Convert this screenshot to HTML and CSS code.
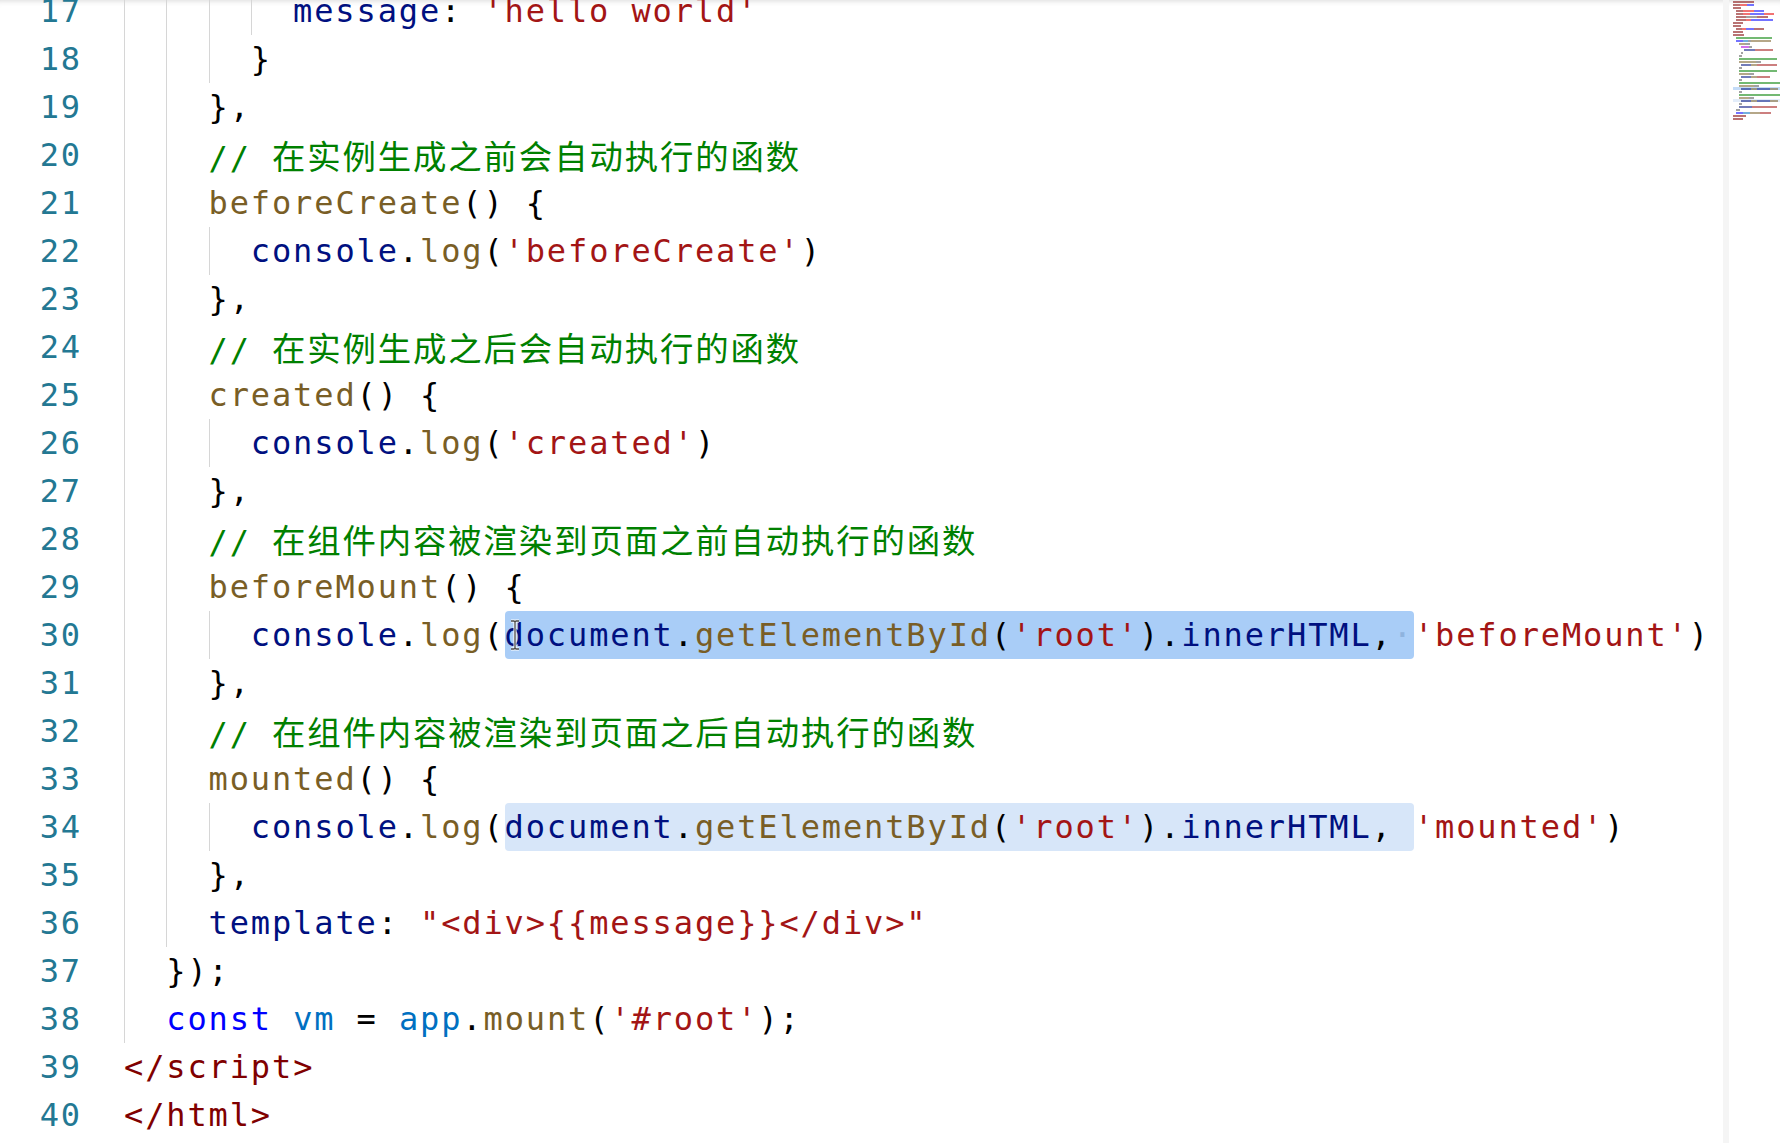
FILE: index.html
```html
<!DOCTYPE html>
<html lang="en">
<head>
    <meta charset="UTF-8">
    <meta name="viewport" content="width=device-width, initial-scale=1.0">
    <title>lesson - lifecycle</title>
    <link rel="stylesheet" href="styles.css">
</head>
<body>
    <div class="editor">
        <div class="code">
            <div class="line"><span class="ln">17</span><span class="src"><span class="ind g"></span><span class="ind g"></span><span class="ind g"></span><span class="ind g"></span><span class="v">message</span>: <span class="s">'hello world'</span></span></div>
            <div class="line"><span class="ln">18</span><span class="src"><span class="ind g"></span><span class="ind g"></span><span class="ind g"></span>}</span></div>
            <div class="line"><span class="ln">19</span><span class="src"><span class="ind g"></span><span class="ind g"></span>},</span></div>
            <div class="line"><span class="ln">20</span><span class="src"><span class="ind g"></span><span class="ind g"></span><span class="c">// <span class="cjk">在实例生成之前会自动执行的函数</span></span></span></div>
            <div class="line"><span class="ln">21</span><span class="src"><span class="ind g"></span><span class="ind g"></span><span class="f">beforeCreate</span>() {</span></div>
            <div class="line"><span class="ln">22</span><span class="src"><span class="ind g"></span><span class="ind g"></span><span class="ind g"></span><span class="v">console</span>.<span class="f">log</span>(<span class="s">'beforeCreate'</span>)</span></div>
            <div class="line"><span class="ln">23</span><span class="src"><span class="ind g"></span><span class="ind g"></span>},</span></div>
            <div class="line"><span class="ln">24</span><span class="src"><span class="ind g"></span><span class="ind g"></span><span class="c">// <span class="cjk">在实例生成之后会自动执行的函数</span></span></span></div>
            <div class="line"><span class="ln">25</span><span class="src"><span class="ind g"></span><span class="ind g"></span><span class="f">created</span>() {</span></div>
            <div class="line"><span class="ln">26</span><span class="src"><span class="ind g"></span><span class="ind g"></span><span class="ind g"></span><span class="v">console</span>.<span class="f">log</span>(<span class="s">'created'</span>)</span></div>
            <div class="line"><span class="ln">27</span><span class="src"><span class="ind g"></span><span class="ind g"></span>},</span></div>
            <div class="line"><span class="ln">28</span><span class="src"><span class="ind g"></span><span class="ind g"></span><span class="c">// <span class="cjk">在组件内容被渲染到页面之前自动执行的函数</span></span></span></div>
            <div class="line"><span class="ln">29</span><span class="src"><span class="ind g"></span><span class="ind g"></span><span class="f">beforeMount</span>() {</span></div>
            <div class="line"><span class="ln">30</span><span class="src"><span class="ind g"></span><span class="ind g"></span><span class="ind g"></span><span class="v">console</span>.<span class="f">log</span>(<span class="sel"><span class="v">document</span>.<span class="f">getElementById</span>(<span class="s">'root'</span>).<span class="v">innerHTML</span>,<span class="ws">·</span><svg class="ibeam" width="12" height="32" viewBox="0 0 12 32"><path d="M2 2h3l1 1 1-1h3M6 3v26M2 30h3l1-1 1 1h3" fill="none" stroke="#fff" stroke-width="3"/><path d="M2 2h3l1 1 1-1h3M6 3v26M2 30h3l1-1 1 1h3" fill="none" stroke="#4a4a4a" stroke-width="1.3"/></svg></span><span class="s">'beforeMount'</span>)</span></div>
            <div class="line"><span class="ln">31</span><span class="src"><span class="ind g"></span><span class="ind g"></span>},</span></div>
            <div class="line"><span class="ln">32</span><span class="src"><span class="ind g"></span><span class="ind g"></span><span class="c">// <span class="cjk">在组件内容被渲染到页面之后自动执行的函数</span></span></span></div>
            <div class="line"><span class="ln">33</span><span class="src"><span class="ind g"></span><span class="ind g"></span><span class="f">mounted</span>() {</span></div>
            <div class="line"><span class="ln">34</span><span class="src"><span class="ind g"></span><span class="ind g"></span><span class="ind g"></span><span class="v">console</span>.<span class="f">log</span>(<span class="sel match"><span class="v">document</span>.<span class="f">getElementById</span>(<span class="s">'root'</span>).<span class="v">innerHTML</span>, </span><span class="s">'mounted'</span>)</span></div>
            <div class="line"><span class="ln">35</span><span class="src"><span class="ind g"></span><span class="ind g"></span>},</span></div>
            <div class="line"><span class="ln">36</span><span class="src"><span class="ind g"></span><span class="ind g"></span><span class="v">template</span>: <span class="s">"&lt;div&gt;{{message}}&lt;/div&gt;"</span></span></div>
            <div class="line"><span class="ln">37</span><span class="src"><span class="ind g"></span>});</span></div>
            <div class="line"><span class="ln">38</span><span class="src"><span class="ind g"></span><span class="k">const</span> <span class="cv">vm</span> = <span class="cv">app</span>.<span class="f">mount</span>(<span class="s">'#root'</span>);</span></div>
            <div class="line"><span class="ln">39</span><span class="src"><span class="t">&lt;/script&gt;</span></span></div>
            <div class="line"><span class="ln">40</span><span class="src"><span class="t">&lt;/html&gt;</span></span></div>
        </div>

        <!-- minimap: one bar per token, width = chars * 1.4px -->
        <div class="minimap" aria-hidden="true">
            <div class="mm"><i class="t" style="width:21px"></i></div>
            <div class="mm"><i class="t" style="width:7px"></i><i class="a" style="width:7px"></i><i class="k" style="width:7px"></i></div>
            <div class="mm"><i class="t" style="width:8px"></i></div>
            <div class="mm"><i style="width:3px"></i><i class="t" style="width:7px"></i><i class="a" style="width:11px"></i><i class="k" style="width:10px"></i></div>
            <div class="mm"><i style="width:3px"></i><i class="t" style="width:7px"></i><i class="a" style="width:7px"></i><i class="k" style="width:14px"></i><i class="a" style="width:10px"></i></div>
            <div class="mm"><i style="width:3px"></i><i class="t" style="width:10px"></i><i class="p" style="width:11px"></i><i class="t" style="width:11px"></i></div>
            <div class="mm"><i style="width:3px"></i><i class="t" style="width:10px"></i><i class="a" style="width:5px"></i><i class="k" style="width:22px"></i></div>
            <div class="mm"><i class="t" style="width:10px"></i></div>
            <div class="mm"><i class="t" style="width:8px"></i></div>
            <div class="mm"><i style="width:3px"></i><i class="t" style="width:6px"></i><i class="a" style="width:4px"></i><i class="k" style="width:8px"></i><i class="t" style="width:10px"></i></div>
            <div class="mm"><i class="t" style="width:10px"></i></div>
            <div class="mm"><i class="t" style="width:11px"></i></div>
            <div class="mm"><i style="width:3px"></i><i class="c" style="width:36px"></i></div>
            <div class="mm"><i style="width:3px"></i><i class="k" style="width:7px"></i><i class="cv" style="width:5px"></i><i class="p" style="width:3px"></i><i class="f" style="width:20px"></i></div>
            <div class="mm"><i style="width:6px"></i><i class="f" style="width:6px"></i><i class="p" style="width:5px"></i></div>
            <div class="mm"><i style="width:8px"></i><i class="r" style="width:8px"></i><i class="p" style="width:3px"></i></div>
            <div class="mm"><i style="width:11px"></i><i class="v" style="width:11px"></i><i class="s" style="width:18px"></i></div>
            <div class="mm"><i style="width:8px"></i><i class="p" style="width:2px"></i></div>
            <div class="mm"><i style="width:6px"></i><i class="p" style="width:3px"></i></div>
            <div class="mm"><i style="width:6px"></i><i class="c" style="width:38px"></i></div>
            <div class="mm"><i style="width:6px"></i><i class="f" style="width:17px"></i><i class="p" style="width:5px"></i></div>
            <div class="mm"><i style="width:8px"></i><i class="v" style="width:10px"></i><i class="f" style="width:6px"></i><i class="s" style="width:20px"></i></div>
            <div class="mm"><i style="width:6px"></i><i class="p" style="width:3px"></i></div>
            <div class="mm"><i style="width:6px"></i><i class="c" style="width:38px"></i></div>
            <div class="mm"><i style="width:6px"></i><i class="f" style="width:10px"></i><i class="p" style="width:5px"></i></div>
            <div class="mm"><i style="width:8px"></i><i class="v" style="width:10px"></i><i class="f" style="width:6px"></i><i class="s" style="width:13px"></i></div>
            <div class="mm"><i style="width:6px"></i><i class="p" style="width:3px"></i></div>
            <div class="mm"><i style="width:6px"></i><i class="c" style="width:41px"></i></div>
            <div class="mm"><i style="width:6px"></i><i class="f" style="width:15px"></i><i class="p" style="width:5px"></i></div>
            <div class="mm sel-mm"><i style="width:8px"></i><i class="v" style="width:10px"></i><i class="f" style="width:6px"></i><i class="v" style="width:13px"></i><i class="f" style="width:8px"></i></div>
            <div class="mm"><i style="width:6px"></i><i class="p" style="width:3px"></i></div>
            <div class="mm"><i style="width:6px"></i><i class="c" style="width:41px"></i></div>
            <div class="mm"><i style="width:6px"></i><i class="f" style="width:10px"></i><i class="p" style="width:5px"></i></div>
            <div class="mm match-mm"><i style="width:8px"></i><i class="v" style="width:10px"></i><i class="f" style="width:6px"></i><i class="v" style="width:13px"></i><i class="f" style="width:8px"></i></div>
            <div class="mm"><i style="width:6px"></i><i class="p" style="width:3px"></i></div>
            <div class="mm"><i style="width:6px"></i><i class="v" style="width:13px"></i><i class="s" style="width:25px"></i></div>
            <div class="mm"><i style="width:3px"></i><i class="p" style="width:4px"></i></div>
            <div class="mm"><i style="width:3px"></i><i class="k" style="width:7px"></i><i class="cv" style="width:7px"></i><i class="f" style="width:10px"></i><i class="s" style="width:11px"></i></div>
            <div class="mm"><i class="t" style="width:13px"></i></div>
            <div class="mm"><i class="t" style="width:10px"></i></div>
        </div>
    </div>
</body>
</html>
```

FILE: styles.css
```css
body {
    margin: 0;
    background-color: #ffffff;
    overflow: hidden;
}

.editor {
    display: flex;
    height: 1143px;
    overflow: hidden;
    box-shadow: inset 0 6px 6px -6px #cfcfcf;
}

.code {
    flex: 1;
    margin-top: -13px;
    font-family: "DejaVu Sans Mono", "Noto Sans CJK SC", monospace;
    font-size: 32px;
    letter-spacing: 1.88px;
    line-height: 48px;
    color: #000000;
    overflow: hidden;
}

.line {
    display: flex;
    height: 48px;
    white-space: pre;
}

.ln {
    width: 82px;
    margin-right: 42px;
    text-align: right;
    color: #237893;
    flex-shrink: 0;
}

.src {
    display: block;
}

.ind {
    display: inline-block;
    width: 42.28px;
    height: 48px;
    box-sizing: border-box;
    vertical-align: top;
}

.ind.g {
    border-left: 1px solid #d6d6d6;
}

.cjk {
    font-family: "Noto Sans CJK SC", sans-serif;
    font-size: 33.4px;
}

.c { color: #008000; }
.f { color: #795e26; }
.v { color: #001080; }
.s { color: #a31515; }
.k { color: #0000ff; }
.cv { color: #0070c1; }
.t { color: #800000; }

.sel {
    position: relative;
    display: inline-block;
    height: 48px;
    vertical-align: top;
    background-color: #a9cdf7;
    border-radius: 4px;
}

.sel.match {
    background-color: #d7e6f9;
}

.ws {
    color: #8fb3de;
}

.ibeam {
    position: absolute;
    left: 4px;
    top: 8px;
}

/* minimap */
.minimap {
    width: 47px;
    flex-shrink: 0;
    border-left: 6px solid #f5f5f5;
    padding-left: 4px;
    box-sizing: content-box;
    overflow: hidden;
}

.mm {
    display: flex;
    height: 3px;
    align-items: center;
    white-space: nowrap;
}

.mm i {
    display: block;
    height: 2px;
    flex-shrink: 0;
    opacity: 0.55;
}

.mm i.t { background-color: #800000; }
.mm i.a { background-color: #e50000; }
.mm i.k { background-color: #0000ff; }
.mm i.p { background-color: #555555; }
.mm i.c { background-color: #008000; }
.mm i.f { background-color: #795e26; }
.mm i.v { background-color: #001080; }
.mm i.s { background-color: #a31515; }
.mm i.r { background-color: #af00db; }
.mm i.cv { background-color: #0070c1; }

.sel-mm {
    background-color: #c4dcf8;
}

.match-mm {
    background-color: #e3edfa;
}
```
